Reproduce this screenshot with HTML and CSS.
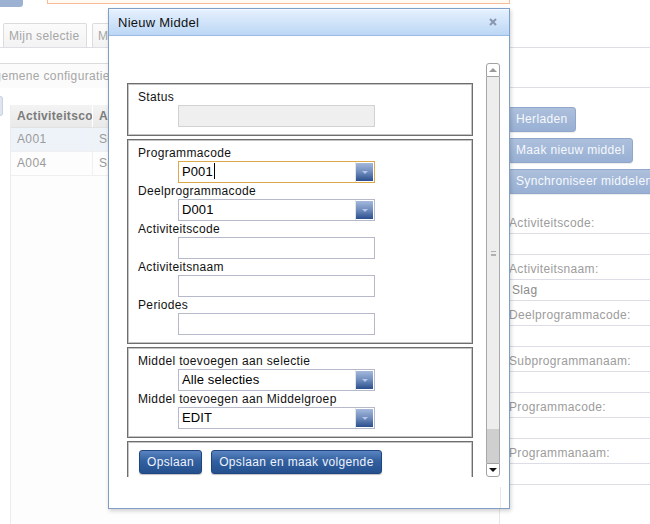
FILE: index.html
```html
<!DOCTYPE html>
<html>
<head>
<meta charset="utf-8">
<link rel="stylesheet" href="styles.css">
</head>
<body>
<div class="page">
  <div class="bg">
    <div class="topbar"><div class="stub"></div><div class="notice"></div></div>
    <div class="tabs">
      <div class="tab">Mijn selectie</div>
      <div class="tab">Mijn middelen</div>
    </div>
    <div class="subtabs"><div class="subtab">Algemene configuratie</div></div>
    <div class="main">
      <div class="left">
        <div class="lstub"></div>
        <div class="grid">
          <div class="grow ghead"><div class="c1">Activiteitscode</div><div class="c2">Activiteitsnaam</div></div>
          <div class="grow sel"><div class="c1">A001</div><div class="c2">Slag</div></div>
          <div class="grow"><div class="c1">A004</div><div class="c2">Spel</div></div>
        </div>
      </div>
      <div class="right">
        <div class="bbtn">Herladen</div>
        <div class="bbtn">Maak nieuw middel</div>
        <div class="bbtn">Synchroniseer middelen</div>
        <div class="details">
          <div class="drow lab">Activiteitscode:</div>
          <div class="drow val"></div>
          <div class="drow lab">Activiteitsnaam:</div>
          <div class="drow val">Slag</div>
          <div class="drow lab">Deelprogrammacode:</div>
          <div class="drow val"></div>
          <div class="drow lab">Subprogrammanaam:</div>
          <div class="drow val"></div>
          <div class="drow lab">Programmacode:</div>
          <div class="drow val"></div>
          <div class="drow lab">Programmanaam:</div>
          <div class="drow val"></div>
        </div>
      </div>
    </div>
  </div>

  <div class="dialog">
    <div class="dlg-title">
      <span class="dlg-name">Nieuw Middel</span>
      <svg class="close" width="8" height="8" viewBox="0 0 8 8"><path d="M1 1L7 7M7 1L1 7" stroke="#8797b0" stroke-width="2" fill="none"/></svg>
    </div>
    <div class="dlg-body">
      <div class="scroll">
        <div class="scroll-content">
          <div class="box">
            <div class="lbl">Status</div>
            <div class="inp dis"></div>
          </div>
          <div class="box">
            <div class="lbl">Programmacode</div>
            <div class="combo focus"><div class="cval">P001<span class="caret"></span></div><div class="trig"></div></div>
            <div class="lbl">Deelprogrammacode</div>
            <div class="combo"><div class="cval">D001</div><div class="trig"></div></div>
            <div class="lbl">Activiteitscode</div>
            <div class="inp"></div>
            <div class="lbl">Activiteitsnaam</div>
            <div class="inp"></div>
            <div class="lbl">Periodes</div>
            <div class="inp"></div>
          </div>
          <div class="box">
            <div class="lbl">Middel toevoegen aan selectie</div>
            <div class="combo"><div class="cval">Alle selecties</div><div class="trig"></div></div>
            <div class="lbl">Middel toevoegen aan Middelgroep</div>
            <div class="combo"><div class="cval">EDIT</div><div class="trig"></div></div>
          </div>
          <div class="box btnbox">
            <div class="btn">Opslaan</div>
            <div class="btn">Opslaan en maak volgende</div>
          </div>
        </div>
        <div class="sbar">
          <div class="sb-up"><span class="tri-up"></span></div>
          <div class="sb-thumb"><span class="grip"></span></div>
          <div class="sb-track"></div>
          <div class="sb-down"><span class="tri-down"></span></div>
        </div>
      </div>
      <div class="footer"><div class="fline"></div></div>
    </div>
  </div>
</div>
</body>
</html>
```

FILE: styles.css
```css
html, body { margin: 0; padding: 0; background: #fff; }
body { font-family: "Liberation Sans", Arial, sans-serif; font-size: 12px; letter-spacing: 0.35px; }

.page { position: relative; width: 650px; height: 524px; overflow: hidden; background: #fff; }
.bg { display: flex; flex-direction: column; height: 524px; }

.topbar { height: 22px; display: flex; align-items: flex-start; flex-shrink: 0; }
.stub { width: 23px; height: 7px; background: #9db1d3; border-bottom-right-radius: 3px; }
.notice { margin-left: 24px; width: 463px; height: 4px; box-sizing: border-box; border: 1px solid #f7bb95; border-top: none; background: #fffaf2; }

.tabs { height: 25px; border-bottom: 1px solid #dedee6; display: flex; align-items: flex-end; padding-left: 3px; flex-shrink: 0; }
.tab { height: 24px; box-sizing: border-box; width: 84px; margin-right: 5px; border: 1px solid #dcdcdc; border-bottom: none; border-radius: 2px 2px 0 0; background: linear-gradient(#fbfbfb, #f3f3f3); color: #a6a6a6; padding-left: 5px; line-height: 24px; white-space: nowrap; overflow: hidden; }

.subtabs { height: 40px; padding-top: 15px; box-sizing: border-box; border-bottom: 1px solid #dedee6; flex-shrink: 0; }
.subtab { height: 25px; box-sizing: border-box; width: 200px; border-top: 1px solid #dcdcdc; color: #a6a6a6; line-height: 25px; text-indent: -17px; white-space: nowrap; background: #fbfbfb; }

.main { flex: 1; display: flex; }
.left { width: 500px; display: flex; }
.lstub { width: 2px; height: 18px; margin-top: 8px; background: #dfe5ee; border: 1px solid #c9d3e2; border-left: none; border-radius: 0 3px 3px 0; }
.grid { margin-left: 7px; margin-top: 17px; flex: 1; border-left: 1px solid #ececec; border-right: 1px solid #e6e6e6; background: #fdfdfd; }
.grow { display: flex; height: 23px; border-bottom: 1px solid #efefef; color: #9a9a9a; line-height: 23px; }
.grow .c1 { width: 75px; padding-left: 6px; border-right: 1px solid #f0f0f0; overflow: hidden; white-space: nowrap; }
.grow .c2 { flex: 1; padding-left: 6px; overflow: hidden; white-space: nowrap; }
.ghead { height: 22px; line-height: 22px; background: linear-gradient(#f3f3f3, #e9e9e9); font-weight: bold; color: #7b7b7b; border-bottom: 1px solid #e2e2e2; }
.ghead .c1 { border-right: 1px solid #fff; }
.sel { background: #eef3f9; }

.right { width: 150px; padding-top: 19px; padding-left: 8px; box-sizing: border-box; display: flex; flex-direction: column; align-items: flex-start; }
.bbtn { height: 25px; box-sizing: border-box; padding: 0 7px; border: 1px solid #90a7cb; border-radius: 3px; background: linear-gradient(#adc0dc, #98b0d4); color: #f6f8fc; line-height: 23px; white-space: nowrap; margin-bottom: 6px; flex-shrink: 0; box-shadow: 0 1px 1px rgba(0,0,0,0.08); }
.details { margin-left: -8px; margin-top: 9px; width: 150px; }
.drow { border-bottom: 1px solid #dcdde6; white-space: nowrap; }
.drow.lab { height: 18px; padding-top: 6px; line-height: 16px; color: #9c9c9c; padding-left: 9px; }
.drow.val { height: 20px; line-height: 20px; color: #8a8a8a; padding-left: 12px; }

/* dialog */
.dialog { position: absolute; left: 108px; top: 8px; width: 402px; height: 501px; box-sizing: border-box; border: 1px solid #7f9fc9; background: #fff; box-shadow: 1px 2px 4px rgba(0,0,0,0.18); display: flex; flex-direction: column; }
.dlg-title { height: 26px; flex-shrink: 0; border-bottom: 1px solid #9bbbe4; background: linear-gradient(#e6f1fe, #bcd7f5); box-shadow: inset 0 1px 0 #f4f9ff; display: flex; align-items: center; justify-content: space-between; padding: 0 12px 0 9px; }
.dlg-name { font-size: 13px; letter-spacing: 0.25px; color: #111; padding-top: 1px; }
.close { display: block; }
.dlg-body { flex: 1; padding: 27px 9px 0 9px; display: flex; flex-direction: column; }
.scroll { height: 414px; display: flex; flex-shrink: 0; }
.scroll-content { flex: 1; overflow: hidden; padding: 20px 13px 0 9px; }

.box { border: 1px solid #6e6e6e; box-shadow: inset 0 0 0 1px #c4c4c4; padding: 5px 10px 8px 10px; margin-bottom: 3px; }
.lbl { line-height: 16px; height: 16px; color: #111; white-space: nowrap; }
.inp { width: 197px; height: 22px; box-sizing: border-box; border: 1px solid #b6b9c9; margin-left: 40px; background: #fff; }
.inp.dis { background: #efefef; border-color: #d2d2d2; }
.combo { width: 197px; height: 22px; box-sizing: border-box; border: 1px solid #b6b9c9; margin-left: 40px; background: #fff; display: flex; }
.combo.focus { border-color: #dca84c; }
.cval { flex: 1; padding-left: 3px; font-size: 13px; letter-spacing: 0.1px; line-height: 20px; color: #000; border-right: 1px solid #e4e4e4; }
.caret { display: inline-block; width: 1px; height: 16px; background: #000; vertical-align: -3px; margin-left: 1px; }
.trig { width: 17px; margin: 1px 1px 1px 0; background: linear-gradient(#a4b8dc, #6f8cbd 50%, #2b4e8d); display: flex; justify-content: center; padding-top: 8px; box-sizing: border-box; }
.trig::after { content: ""; width: 0; height: 0; border-left: 3px solid transparent; border-right: 3px solid transparent; border-top: 3px solid #b4c6e6; }

.btnbox { padding: 8px 11px 20px 11px; display: flex; gap: 9px; }
.btn { height: 24px; box-sizing: border-box; padding: 0 7px; border: 1px solid #204681; border-radius: 3px; background: linear-gradient(#5a84c1, #33609f 45%, #24508e); color: #eef3fb; line-height: 22px; white-space: nowrap; box-shadow: 0 1px 1px rgba(0,0,0,0.25); }

.sbar { width: 14px; display: flex; flex-direction: column; flex-shrink: 0; }
.sb-up { height: 14px; box-sizing: border-box; border: 1px solid #a2a2a2; border-radius: 3px 3px 0 0; background: #fff; display: flex; justify-content: center; align-items: center; }
.tri-up { width: 0; height: 0; border-left: 4px solid transparent; border-right: 4px solid transparent; border-bottom: 4px solid #9a9a9a; }
.sb-thumb { height: 352px; box-sizing: border-box; border-left: 1px solid #a8a8a8; border-right: 1px solid #a8a8a8; background: #ededed; display: flex; justify-content: center; align-items: center; }
.grip { width: 5px; height: 5px; border-top: 1px solid #b0b0b0; border-bottom: 1px solid #b0b0b0; box-sizing: border-box; background: linear-gradient(transparent 2px, #b0b0b0 2px, #b0b0b0 3px, transparent 3px); }
.sb-track { height: 34px; box-sizing: border-box; border-left: 1px solid #a8a8a8; border-right: 1px solid #a8a8a8; background: #cfcfcf; }
.sb-down { height: 14px; box-sizing: border-box; border: 1px solid #a2a2a2; border-radius: 0 0 3px 3px; background: #fff; display: flex; justify-content: center; align-items: center; }
.tri-down { width: 0; height: 0; border-left: 4px solid transparent; border-right: 4px solid transparent; border-top: 4px solid #111; }

.footer { flex: 1; display: flex; justify-content: flex-end; }
.fline { width: 0; border-left: 1px solid #e6e6e6; margin-top: 10px; margin-right: -1px; }
```
